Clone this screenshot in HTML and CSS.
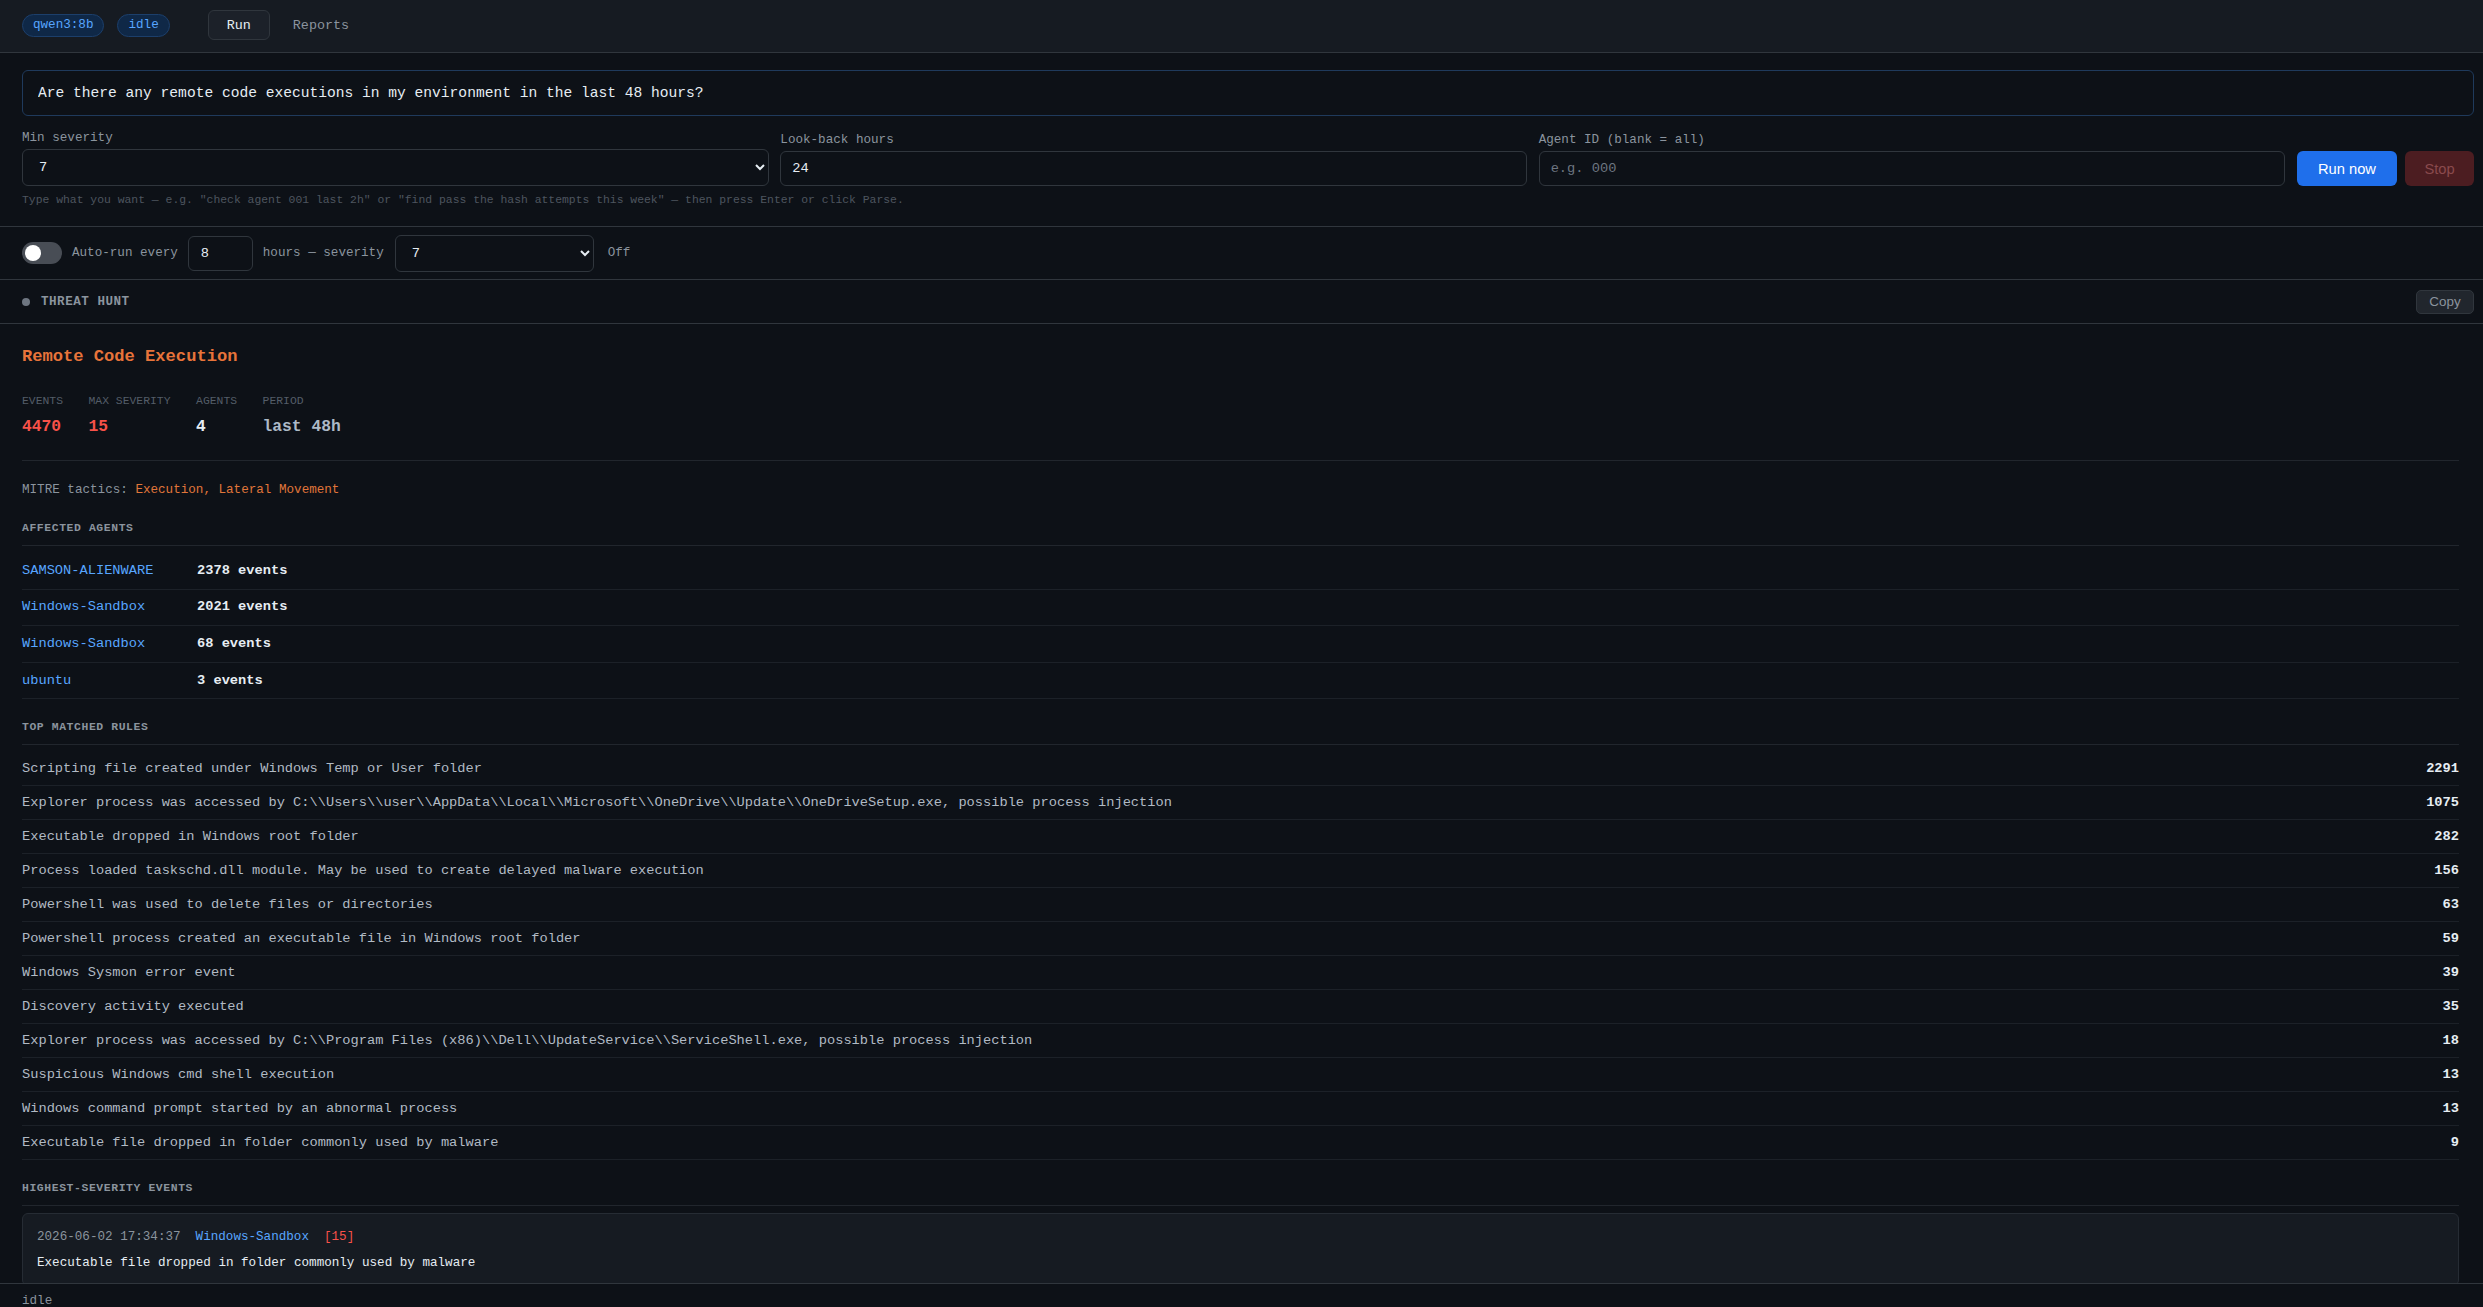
FILE: index.html
```html
<!DOCTYPE html>
<html lang="en">

<head>
    <meta charset="UTF-8">
    <meta name="viewport" content="width=device-width, initial-scale=1.0">
    <title>Threat Hunt</title>
    <link rel="stylesheet" href="styles.css">
</head>

<body>
    <header class="topbar">
        <div class="pills">
            <span class="pill">qwen3:8b</span>
            <span class="pill">idle</span>
        </div>
        <nav class="tabs">
            <button class="tab active">Run</button>
            <button class="tab">Reports</button>
        </nav>
    </header>

    <main class="app">
        <!-- Запрос -->
        <section class="composer">
            <input class="query" type="text" value="Are there any remote code executions in my environment in the last 48 hours?">
            <div class="fields">
                <label class="field">
                    <span>Min severity</span>
                    <select class="select">
                        <option>7</option>
                    </select>
                </label>
                <label class="field">
                    <span>Look-back hours</span>
                    <input class="input" type="text" value="24">
                </label>
                <label class="field">
                    <span>Agent ID (blank = all)</span>
                    <input class="input" type="text" placeholder="e.g. 000">
                </label>
                <div class="actions">
                    <button class="btn primary">Run now</button>
                    <button class="btn stop" disabled>Stop</button>
                </div>
            </div>
            <p class="hint">Type what you want — e.g. "check agent 001 last 2h" or "find pass the hash attempts this week" — then press Enter or click Parse.</p>
        </section>

        <!-- Авто-запуск -->
        <section class="autorun">
            <span class="toggle"><span class="knob"></span></span>
            <span>Auto-run every</span>
            <input class="input small" type="text" value="8">
            <span>hours — severity</span>
            <select class="select sev">
                <option>7</option>
            </select>
            <span class="off">Off</span>
        </section>

        <!-- Результаты -->
        <section class="results">
            <div class="results-head">
                <span class="dot"></span>
                <span class="results-title">THREAT HUNT</span>
                <button class="copy">Copy</button>
            </div>

            <div class="results-body">
                <h2 class="hunt-title">Remote Code Execution</h2>

                <div class="stats">
                    <div class="stat">
                        <span class="stat-label">EVENTS</span>
                        <span class="stat-value red">4470</span>
                    </div>
                    <div class="stat">
                        <span class="stat-label">MAX SEVERITY</span>
                        <span class="stat-value red">15</span>
                    </div>
                    <div class="stat">
                        <span class="stat-label">AGENTS</span>
                        <span class="stat-value white">4</span>
                    </div>
                    <div class="stat">
                        <span class="stat-label">PERIOD</span>
                        <span class="stat-value grey">last 48h</span>
                    </div>
                </div>

                <p class="mitre">MITRE tactics: <span class="tactics">Execution, Lateral Movement</span></p>

                <h3 class="block-title first">AFFECTED AGENTS</h3>
                <div class="agents">
                    <div class="agent"><span class="agent-name">SAMSON-ALIENWARE</span><b>2378 events</b></div>
                    <div class="agent"><span class="agent-name">Windows-Sandbox</span><b>2021 events</b></div>
                    <div class="agent"><span class="agent-name">Windows-Sandbox</span><b>68 events</b></div>
                    <div class="agent"><span class="agent-name">ubuntu</span><b>3 events</b></div>
                </div>

                <h3 class="block-title">TOP MATCHED RULES</h3>
                <div class="rules">
                    <div class="rule"><span>Scripting file created under Windows Temp or User folder</span><b>2291</b></div>
                    <div class="rule"><span>Explorer process was accessed by C:\\Users\\user\\AppData\\Local\\Microsoft\\OneDrive\\Update\\OneDriveSetup.exe, possible process injection</span><b>1075</b></div>
                    <div class="rule"><span>Executable dropped in Windows root folder</span><b>282</b></div>
                    <div class="rule"><span>Process loaded taskschd.dll module. May be used to create delayed malware execution</span><b>156</b></div>
                    <div class="rule"><span>Powershell was used to delete files or directories</span><b>63</b></div>
                    <div class="rule"><span>Powershell process created an executable file in Windows root folder</span><b>59</b></div>
                    <div class="rule"><span>Windows Sysmon error event</span><b>39</b></div>
                    <div class="rule"><span>Discovery activity executed</span><b>35</b></div>
                    <div class="rule"><span>Explorer process was accessed by C:\\Program Files (x86)\\Dell\\UpdateService\\ServiceShell.exe, possible process injection</span><b>18</b></div>
                    <div class="rule"><span>Suspicious Windows cmd shell execution</span><b>13</b></div>
                    <div class="rule"><span>Windows command prompt started by an abnormal process</span><b>13</b></div>
                    <div class="rule"><span>Executable file dropped in folder commonly used by malware</span><b>9</b></div>
                </div>

                <h3 class="block-title">HIGHEST-SEVERITY EVENTS</h3>
                <div class="event">
                    <div class="event-meta">
                        <span class="time">2026-06-02 17:34:37</span>
                        <span class="agent-name">Windows-Sandbox</span>
                        <span class="level">[15]</span>
                    </div>
                    <div class="event-text">Executable file dropped in folder commonly used by malware</div>
                </div>
            </div>
        </section>
    </main>

    <footer class="status">idle</footer>
</body>

</html>
```

FILE: styles.css
```css
* {
    margin: 0;
    padding: 0;
    box-sizing: border-box;
}

html, body {
    height: 100%;
    overflow: hidden;
    background: #0d1117;
    color: #e6edf3;
    color-scheme: dark;
    font-family: "Liberation Mono", "DejaVu Sans Mono", monospace;
    font-size: 12.6px;
    line-height: 16px;
}

body {
    display: flex;
    flex-direction: column;
}

button, input, select {
    font-family: inherit;
    color: inherit;
}

/* Верхняя панель */
.topbar {
    flex: none;
    height: 53px;
    display: flex;
    align-items: center;
    gap: 38px;
    padding: 0 22px 2px;
    background: #161b22;
    border-bottom: 1px solid #30363d;
}

.pills {
    display: flex;
    gap: 13px;
}

.pill {
    height: 23px;
    padding: 0 10px;
    display: flex;
    align-items: center;
    border-radius: 12px;
    background: #0f2847;
    border: 1px solid #1c3f6b;
    color: #58a6ff;
    font-size: 12.6px;
}

.tabs {
    display: flex;
    gap: 4px;
}

.tab {
    height: 30px;
    padding: 0 18px;
    border: 1px solid transparent;
    border-radius: 6px;
    background: none;
    color: #8b949e;
    font-size: 13.4px;
}

.tab.active {
    background: #1c2129;
    border-color: #30363d;
    color: #e6edf3;
}

.app {
    flex: 1;
    min-height: 0;
    overflow: hidden;
}

/* Форма запроса */
.composer {
    padding: 17px 9px 19px 22px;
    border-bottom: 1px solid #30363d;
}

.query {
    width: 100%;
    height: 46px;
    padding: 0 15px;
    background: #0d1117;
    border: 1px solid #1f3a5c;
    border-radius: 6px;
    font-size: 14.6px;
    color: #e6edf3;
}

.fields {
    margin-top: 14px;
    display: grid;
    grid-template-columns: 1fr 1fr 1fr auto;
    column-gap: 11.5px;
    align-items: end;
}

.field {
    display: flex;
    flex-direction: column;
    gap: 3px;
    color: #8b949e;
}

.input, .select {
    height: 35px;
    padding: 0 11px;
    background: #0d1117;
    border: 1px solid #30363d;
    border-radius: 6px;
    font-size: 13.7px;
    color: #e6edf3;
}

.select {
    height: 37px;
    padding: 0 12px;
}

.input::placeholder {
    color: #6e7681;
}

.actions {
    display: flex;
    gap: 8px;
}

.btn {
    height: 35px;
    border: none;
    border-radius: 6px;
    font-family: "Liberation Sans", Arial, sans-serif;
    font-size: 14.7px;
}

.btn.primary {
    width: 100px;
    background: #1f6feb;
    color: #ffffff;
}

.btn.stop {
    width: 69px;
    background: #4c1d21;
    color: #8a4a4d;
}

.hint {
    margin-top: 7px;
    font-size: 11.4px;
    line-height: 14px;
    color: #4d555f;
}

/* Авто-запуск */
.autorun {
    height: 53px;
    display: flex;
    align-items: center;
    gap: 10px;
    padding: 0 22px;
    border-bottom: 1px solid #30363d;
    color: #8b949e;
}

.toggle {
    width: 40px;
    height: 22px;
    border-radius: 11px;
    background: #484d55;
    padding: 3px;
    display: flex;
}

.knob {
    width: 16px;
    height: 16px;
    border-radius: 50%;
    background: #ffffff;
}

.input.small {
    width: 65px;
    padding: 0 12px;
}

.select.sev {
    width: 199px;
    margin-left: 1px;
}

.off {
    margin-left: 4px;
}

/* Блок результатов */
.results-head {
    height: 44px;
    display: flex;
    align-items: center;
    gap: 11px;
    padding: 0 9px 0 22px;
    border-bottom: 1px solid #30363d;
}

.dot {
    width: 8px;
    height: 8px;
    border-radius: 50%;
    background: #6e7681;
}

.results-title {
    flex: 1;
    font-weight: bold;
    letter-spacing: 0.5px;
    color: #8b949e;
}

.copy {
    width: 58px;
    height: 24px;
    border: 1px solid #30363d;
    border-radius: 5px;
    background: #21262d;
    color: #8b949e;
    font-family: "Liberation Sans", Arial, sans-serif;
    font-size: 13.4px;
}

.results-body {
    padding: 22px 24px 0 22px;
}

.hunt-title {
    font-size: 17.1px;
    line-height: 22px;
    font-weight: bold;
    color: #e8743a;
}

.stats {
    margin-top: 26px;
    padding-bottom: 23px;
    display: flex;
    gap: 25.5px;
    border-bottom: 1px solid #21262d;
}

.stat {
    display: flex;
    flex-direction: column;
    gap: 9px;
}

.stat-label {
    font-size: 11.4px;
    line-height: 14px;
    color: #545d68;
}

.stat-value {
    font-size: 16.3px;
    line-height: 20px;
    font-weight: bold;
}

.red {
    color: #f85149;
}

.white {
    color: #e6edf3;
}

.grey {
    color: #adbac7;
}

.mitre {
    margin-top: 21px;
    color: #8b949e;
}

.tactics {
    color: #e0763a;
}

.block-title {
    margin-top: 21px;
    padding-bottom: 9.5px;
    margin-bottom: 7.5px;
    border-bottom: 1px solid #21262d;
    font-size: 11.4px;
    line-height: 14px;
    font-weight: bold;
    letter-spacing: 0.6px;
    color: #8b949e;
}

.block-title.first {
    margin-top: 23px;
}

.agent {
    display: grid;
    grid-template-columns: 175px 1fr;
    padding: 9.8px 0;
    border-bottom: 1px solid #1c2128;
    font-size: 13.7px;
}

.agent-name {
    color: #58a6ff;
}

.agent b, .rule b {
    color: #e6edf3;
}

.rule {
    display: flex;
    justify-content: space-between;
    padding: 8.5px 0;
    border-bottom: 1px solid #1c2128;
    font-size: 13.7px;
    color: #b1bac4;
}

/* Карточка события */
.event {
    padding: 15px 14px 14px;
    background: #161b22;
    border: 1px solid #262c34;
    border-radius: 6px;
}

.event-meta {
    display: flex;
    gap: 15px;
}

.time {
    color: #8b949e;
}

.level {
    color: #f85149;
}

.event-text {
    margin-top: 10px;
    color: #e6edf3;
}

.status {
    flex: none;
    height: 24px;
    padding: 9px 22px 0;
    overflow: hidden;
    background: #0d1117;
    border-top: 1px solid #30363d;
    color: #8b949e;
}
```
